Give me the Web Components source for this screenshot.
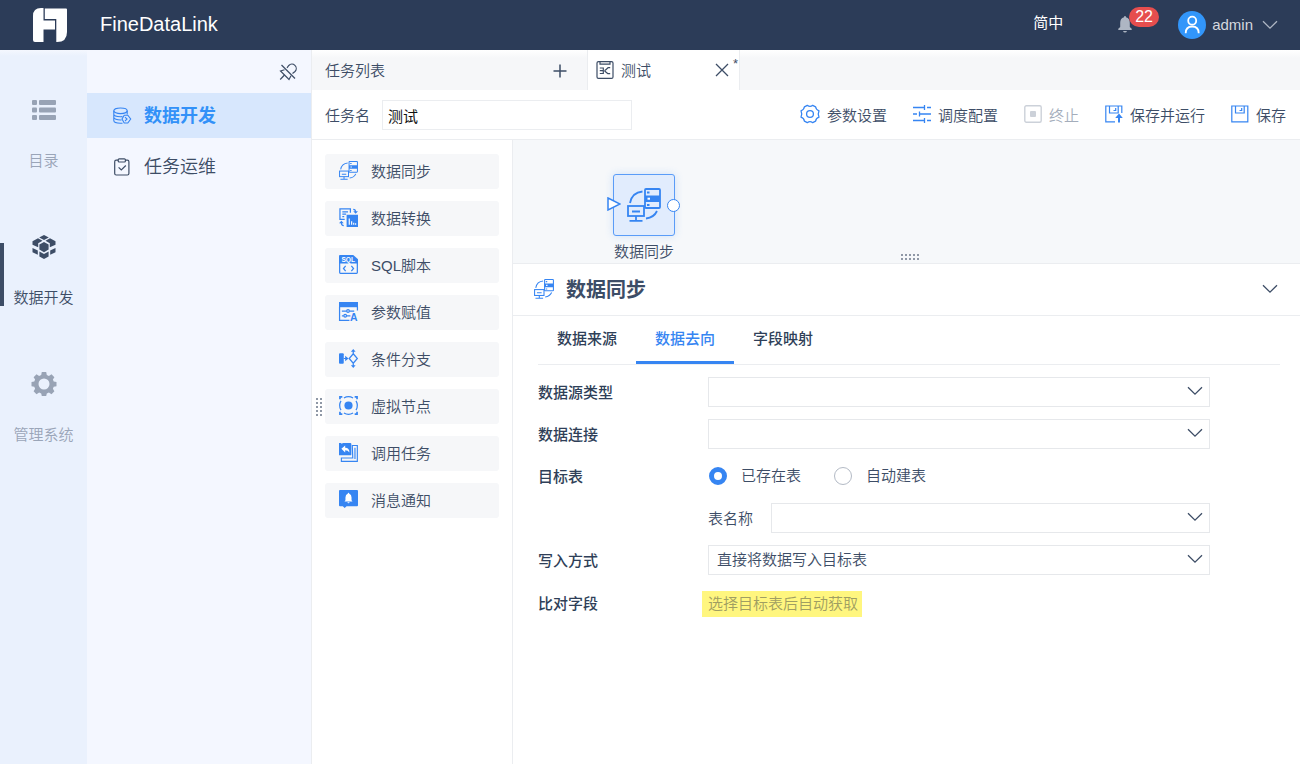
<!DOCTYPE html>
<html lang="zh-CN">
<head>
<meta charset="utf-8">
<title>FineDataLink</title>
<style>
  html, body { margin: 0; height: 100%; }
  body {
    font-family: "Liberation Sans", "Noto Sans CJK SC", sans-serif;
    font-size: 15px; line-height: 20px; font-weight: 350; color: #3d4d66;
    --blue: #3685f2; --line: #ebedf0; --text: #3d4d66; --muted: #9aa5b8; --pale: #f6f7f9;
  }
</style>
</head>
<body>
<fdl-app></fdl-app>
<script>
const ICONS = {
  logo: ['0 0 34 34', '<path fill="#fff" d="M8 0h2.500v12.500H22v9H10.500V34H2q-2 0-2-2V8Q0 0 8 0z"/><path fill="#fff" d="M11.800.5H33q1 0 1 1V24q0 10-10 10h-.7V11H11.800z"/>'],
  list: ['0 0 24 20', '<g fill="#98a3b5"><rect width="5" height="5" rx="1"/><rect x="7" width="17" height="5" rx="1"/><rect y="7.500" width="5" height="5" rx="1"/><rect x="7" y="7.500" width="17" height="5" rx="1"/><rect y="15" width="5" height="5" rx="1"/><rect x="7" y="15" width="17" height="5" rx="1"/></g>'],
  cubes: ['0 0 24 24', '<g fill="#3d4d66"><path d="M12 0l4.800 2.500L12 5 7.200 2.500z"/><path d="M6 3.300l4.500 2.400-4.300 2.500v4L.5 9.800V6.300z"/><path d="M18 3.300l-4.500 2.400 4.300 2.500v4l5.700-2.400V6.300z"/><path d="M12 7l4.600 2.400v5.200L12 17.200l-4.600-2.600V9.400z"/><path d="M.5 13l5.300 2.400v4.400L.5 17.300z"/><path d="M23.500 13l-5.300 2.400v4.400l5.300-2.500z"/><path d="M7.400 16.500l4.600 2.400 4.600-2.400v5L12 24l-4.600-2.500z"/></g>'],
  gear: ['0 0 24 24', '<path fill="#98a3b5" fill-rule="evenodd" d="M9.800 0h4.400l.6 3 2.100.9L19.500 2.200l2.900 3.100-1.500 2.300.8 2 2.800.5v4.200l-2.800.5-.8 2 1.500 2.400-2.900 3-2.600-1.600-2.100.8-.6 2.600H9.800l-.6-2.600-2.100-.8-2.600 1.600-2.900-3 1.500-2.400-.8-2L-.5 14.300v-4.200l2.800-.5.800-2-1.500-2.300 2.900-3.100 2.600 1.700 2.100-.9zM12 6.500a5.500 5.500 0 100 11 5.500 5.500 0 000-11z"/>'],
  unpin: ['0 0 18 18', '<g fill="none" stroke="#3d4d66" stroke-width="1.200"><path d="M2.500 2l13.500 13.500"/><path d="M8 4.800L9.800 2.500a4.200 4.200 0 016.200 6L13.500 10.500"/><path d="M5.500 6.700L1.500 8l8.500 8.500 2-3.800"/><path d="M5.500 12l-4.300 4.500"/></g>'],
  database: ['0 0 18 18', '<g fill="none" stroke="#3685f2" stroke-width="1.100"><ellipse cx="7.500" cy="3.800" rx="6.700" ry="2.800"/><path d="M.8 3.800v9.700c0 1.500 3 2.700 6.700 2.700h2M14.200 3.800V7.500M.8 7c0 1.500 3 2.700 6.700 2.700l2-.1M.8 10.300C.8 11.800 4 13 7.500 13h1"/><path d="M11.200 8.200h3.600L17.700 12l-2.900 4h-3.600l-2.200-4z"/><path d="M12 10.200l2 1.900-2 1.900"/></g>'],
  clipboard: ['0 0 18 18', '<g fill="none" stroke="#3d4d66" stroke-width="1.200"><rect x="1.700" y="2.200" width="14.200" height="14.800" rx="1.500"/><rect x="5.200" y=".8" width="7.200" height="3.200" rx="1" fill="#f4f7ff"/><path d="M5.600 9.300l2.700 2.700 4.500-4.500"/></g>'],
  bell: ['0 0 14 18', '<path fill="#aeb6c3" d="M7 1q1 0 1 1.300c2.800.7 3.800 3 3.800 5.700v4l1.900 1.700V15H.3v-1.300L2.200 12V8C2.200 5.300 3.200 3 6 2.300Q6 1 7 1zM5 16h4q-.5 1.500-2 1.500T5 16z"/>'],
  user: ['0 0 28 28', '<circle cx="14" cy="14" r="14" fill="#3296fa"/><g fill="none" stroke="#fff" stroke-width="1.800"><circle cx="14.200" cy="9.700" r="4"/><path d="M7.700 22.200c0-4.500 2.500-6.700 6.500-6.700s6.500 2.200 6.500 6.700"/></g>'],
  down: ['0 0 16 10', '<path d="M1 1.200l7 7 7-7" fill="none" stroke="currentColor" stroke-width="1.300"/>'],
  plus: ['0 0 14 14', '<path d="M7 .5v13M.5 7h13" stroke="#3d4d66" stroke-width="1.500"/>'],
  close: ['0 0 14 14', '<path d="M1 1l12 12M13 1L1 13" stroke="#3d4d66" stroke-width="1.300"/>'],
  task: ['0 0 18 18', '<g fill="none" stroke="#3d4d66" stroke-width="1.200"><rect x="1" y=".6" width="16" height="16.800" rx="1.500"/><path d="M4 .8v2.400h10V.8M3.800 7h3.500v5.500H3.800M3.800 9.700h3.500M14.200 6.700H12Q10 8.500 8.500 9.700M14.200 12.700H12Q10 11 8.500 9.700"/></g>'],
  params: ['0 0 20 20', '<g fill="none" stroke="#3685f2" stroke-width="1.300"><path d="M7.300 1.300Q10 3.600 12.700 1.300l2.900 1.500q.3 3 3.400 4-1.500 3.200 0 6.400-3.100 1-3.400 4l-2.900 1.500q-2.700-2.300-5.400 0l-2.900-1.500q-.3-3-3.400-4 1.500-3.200 0-6.400 3.100-1 3.400-4z" stroke-linejoin="round"/><circle cx="10" cy="10" r="3.400"/></g>'],
  sliders: ['0 0 18 18', '<g fill="none" stroke="#3685f2" stroke-width="1.300"><path d="M0 2.500h11.500M14 2.500h4M11.500 0v5M0 9h4M6.500 9H18M6.500 6.500v5M0 15.500h11.500M14 15.500h4M11.500 13v5"/></g>'],
  stop: ['0 0 18 18', '<rect x=".8" y=".8" width="16.400" height="16.400" rx="1.500" fill="none" stroke="#ccd1d9" stroke-width="1.400"/><rect x="6" y="6" width="6" height="6" rx="1" fill="#ccd1d9"/>'],
  saverun: ['0 0 18 18', '<g fill="none" stroke="#3685f2" stroke-width="1.200"><path d="M10 16.800H.8V1h16v7"/><path d="M4.500 1v7h8.700V1M10.700 3v2.500H8.500"/></g><path d="M14 8.500l3.800 4.500H15v4.500h-2V13h-2.800z" fill="#3685f2"/>'],
  save: ['0 0 18 18', '<g fill="none" stroke="#3685f2" stroke-width="1.200"><path d="M.8 1h16v15.800H.8z"/><path d="M4.500 1v7h8.700V1M10.700 3v2.500H8.500"/></g>'],
  sync: ['0 0 34 34', '<g fill="none" stroke="#3685f2" stroke-width="1.800"><path d="M3 15Q5 4.500 15.500 3.500M30 23q-3 6.500-11 7.500"/><rect x="1" y="18" width="16" height="10"/><path d="M5 23.500h8M9 28v4M2.500 32.800h13"/><rect x="18" y="1" width="15" height="19" rx="1"/></g><path fill="#3685f2" d="M18 7.500h15v6.500H18zM20 3.500h2.500v2H20zM20 16h2.500v2H20z"/><path fill="#fff" d="M20.500 9.700H23v2h-2.500z"/>'],
  transform: ['0 0 20 20', '<g fill="none" stroke="#3685f2" stroke-width="1.300"><path d="M6 12H1V1h11v4M3.500 4h6M3.500 6.500h4M3.500 9h2M15 1.500q2.500 0 2.500 3M5 18.500q-2.500 0-2.500-3"/></g><path fill="#3685f2" d="M15 3.500h5L17.500 6zM0 16h5L2.500 13.500zM8 7h12v13H8z"/><path d="M10.800 17.500V11M13.300 17.500V14M15.500 17.500v-2M17.500 17.500V16" stroke="#fff" stroke-width="1.200"/>'],
  sql: ['0 0 20 20', '<path fill="#3685f2" d="M1 0h14l5 4.500V9H0V1q0-1 1-1z"/><path d="M.7 8v10.500q0 .8.800.8h17q.8 0 .8-.8V8M7 11.500l-2.300 2.700L7 17M13 11.500l2.300 2.700L13 17" fill="none" stroke="#3685f2" stroke-width="1.300"/><text x="2.500" y="7.800" font-size="7" font-weight="700" fill="#fff" font-family="Liberation Sans, sans-serif">SQL</text>'],
  assign: ['0 0 20 20', '<path fill="#3685f2" d="M0 0h20v5.500H0z"/><g stroke="#3685f2" fill="none" stroke-width="1.300"><path d="M.6 5v14.400H11M19.400 5v4M3 9.500h5M11 9.500h5M3 14.500h2M8 14.500h4"/><circle cx="9.500" cy="9.500" r="1.400"/><circle cx="6.500" cy="14.500" r="1.400"/></g><text x="11.500" y="19.800" font-size="11" font-weight="700" fill="#3685f2" font-family="Liberation Sans, sans-serif">A</text>'],
  branch: ['0 0 20 20', '<g fill="#3685f2"><rect y="4.500" width="5" height="11" rx="1"/><path d="M6.500 7L10 10l-3.500 3zM15 0l2.500 3h-5zM15 20l2.500-3h-5z"/></g><path d="M5 10h3M15 2v3M15 15v3M15 5l4.300 5-4.300 5-4.300-5z" fill="none" stroke="#3685f2" stroke-width="1.300"/>'],
  virtual: ['0 0 20 20', '<circle cx="10" cy="10" r="4.300" fill="#3685f2"/><g fill="none" stroke="#3685f2"><path d="M5.200 2.100a9.200 9.200 0 019.600 0M5.200 17.900a9.200 9.200 0 009.600 0M2.100 5.200a9.200 9.200 0 000 9.600M17.900 5.200a9.200 9.200 0 010 9.600" stroke-width="1.300"/><path d="M1 3.500V1h2.500M16.500 1H19v2.500M19 16.500V19h-2.500M3.500 19H1v-2.500" stroke-width="1.800"/></g>'],
  call: ['0 0 20 20', '<path fill="#3685f2" d="M0 0h2q1 1.500 2 0h8q1 0 1 1v11q0 1-1 1H0z"/><path fill="#fff" d="M2.500 6l4-3.500V5Q11 5 11 10 9.500 7.500 6.500 7.500V10z"/><path d="M14 2.600h5.300v16.700H2.500v-3.500H14.500zM16.800 5v11.800" fill="none" stroke="#3685f2" stroke-width="1.200"/>'],
  notice: ['0 0 20 20', '<path fill="#3685f2" d="M1 0h18q1 0 1 1v15q0 1-1 1H8l-2 2-2-2H1q-1 0-1-1V1q0-1 1-1z"/><path fill="#fff" d="M10 3q.8 0 .8 1 2.400.8 2.400 4v2.800l1 1.400H5.800l1-1.400V8q0-3.200 2.400-4 0-1 .8-1zM8.800 12.800h2.400q-.3 1.200-1.200 1.200t-1.200-1.200z"/>']
};

function define(name, render) {
  customElements.define(name, class extends HTMLElement {
    connectedCallback() {
      if (this.shadowRoot) return;
      const t = document.createElement('template');
      t.innerHTML = '<style>*{box-sizing:border-box}button,input,select{font:inherit;color:inherit;margin:0}button{border:0;background:none;padding:0;text-align:left;cursor:pointer}a{color:inherit;text-decoration:none}</style>' + render(this);
      this.attachShadow({ mode: 'open' }).append(t.content.cloneNode(true));
    }
  });
}
const attr = (el, n) => el.getAttribute(n) || '';

/* <fdl-icon name size>: size is the drawn width */
define('fdl-icon', el => {
  const [box, body] = ICONS[attr(el, 'name')];
  const [, , w, h] = box.split(' ').map(Number);
  const width = Number(attr(el, 'size')) || w;
  return `<style>:host{display:block;flex:none}svg{display:block;overflow:visible}</style>
  <svg width="${width}" height="${Math.round(width * h / w)}" viewBox="${box}" aria-hidden="true">${body}</svg>`;
});

define('drag-dots', el => `<style>
  :host{display:grid;grid-template-columns:repeat(${attr(el, 'cols')},2px);gap:2px}
  i{width:2px;height:2px;background:#8f98a6}
  </style>${'<i></i>'.repeat(10)}`);

define('fdl-header', () => `<style>
  :host{display:flex;align-items:center;height:50px;background:#2c3c58;color:#fff;padding:0 22px 0 33px;font-weight:400}
  h1{margin:0 auto 0 33px;padding-bottom:2px;font-size:20px;line-height:24px;font-weight:400}
  .lang{margin-right:55px;padding-bottom:5px}
  .bell{position:relative;margin-right:46px;padding-bottom:2px}
  .bell span{position:absolute;left:11px;top:-8px;height:20px;border-radius:10px;background:#e64e4e;padding:0 6px;font-size:16px;line-height:20px}
  .user{display:flex;align-items:center;color:#d5d8de}
  .user span{margin:0 9px 0 6px}
  .user fdl-icon:last-child{color:#aeb6c3}
  </style>
  <fdl-icon name="logo"></fdl-icon><h1>FineDataLink</h1>
  <button class="lang">简中</button>
  <button class="bell" aria-label="消息"><fdl-icon name="bell"></fdl-icon><span>22</span></button>
  <button class="user"><fdl-icon name="user"></fdl-icon><span>admin</span><fdl-icon name="down"></fdl-icon></button>`);

define('rail-item', el => `<style>
  :host{display:block;height:137px;color:var(--muted)}
  :host([active]){color:var(--text)}
  a{display:flex;flex-direction:column;align-items:center;gap:29px;position:relative}
  .pic{height:24px;display:flex;align-items:center}
  :host([active]) a::before{content:"";position:absolute;left:0;top:8px;width:4px;height:63px;background:#3d4d66}
  </style><a href="#"><span class="pic"><fdl-icon name="${attr(el, 'icon')}"></fdl-icon></span><slot></slot></a>`);

define('side-rail', () => `<style>
  :host{display:block;width:87px;background:linear-gradient(#f4f7fe,#eaf1fd 6px);padding-top:48px}
  </style><nav>
  <rail-item icon="list">目录</rail-item>
  <rail-item icon="cubes" active>数据开发</rail-item>
  <rail-item icon="gear">管理系统</rail-item></nav>`);

define('menu-item', el => `<style>
  :host{display:block;font-size:18px}
  a{display:flex;align-items:center;gap:13px;height:45px;padding-left:26px}
  :host([active]){background:#d7e7fd;color:#3291f8;font-weight:700}
  </style><a href="#"><fdl-icon name="${attr(el, 'icon')}"></fdl-icon><slot></slot></a>`);

define('side-menu', () => `<style>
  :host{display:block;width:225px;background:#f4f7ff;border-right:1px solid var(--line)}
  .top{display:flex;justify-content:flex-end;align-items:center;height:43px;padding-right:14px}
  nav{display:grid;gap:6px}
  </style><div class="top"><button aria-label="取消固定"><fdl-icon name="unpin"></fdl-icon></button></div>
  <nav><menu-item icon="database" active>数据开发</menu-item><menu-item icon="clipboard">任务运维</menu-item></nav>`);

define('task-tabs', () => `<style>
  :host{display:flex;height:40px;background:linear-gradient(#fff,var(--pale) 8px)}
  .list{width:275px;display:flex;align-items:center;justify-content:space-between;padding:2px 20px 0 13px}
  .tab{position:relative;width:153px;display:flex;align-items:center;gap:7px;padding:0 10px 0 8px;background:#fff;border:solid var(--line);border-width:0 1px}
  .tab span{margin-right:auto;padding-top:2px}
  sup{position:absolute;right:1px;top:6px;font-size:13px;line-height:16px}
  </style>
  <div class="list"><span>任务列表</span><button aria-label="新建任务"><fdl-icon name="plus"></fdl-icon></button></div>
  <div class="tab"><fdl-icon name="task"></fdl-icon><span>测试</span><button aria-label="关闭"><fdl-icon name="close"></fdl-icon></button><sup>*</sup></div>`);

define('tool-button', el => `<style>
  :host{display:block}
  button{display:flex;align-items:center;gap:7px}
  fdl-icon{padding-bottom:4px}
  button:disabled{color:#a4adbb}
  </style><button ${el.hasAttribute('disabled') ? 'disabled' : ''}><fdl-icon name="${attr(el, 'icon')}" size="${attr(el, 'size') || 18}"></fdl-icon><slot></slot></button>`);

define('task-toolbar', () => `<style>
  :host{display:flex;align-items:center;gap:26px;height:50px;padding:0 14px 0 13px;background:#fff;border-bottom:1px solid var(--line)}
  .name{display:flex;align-items:center;gap:12px;margin-right:auto}
  .name label{padding-top:2px}
  input{width:250px;height:30px;border:1px solid var(--line);padding:2px 5px 0;color:#111;font-weight:400;outline:0}
  tool-button{padding-top:2px}
  </style>
  <div class="name"><label for="task-name">任务名</label><input id="task-name" value="测试"></div>
  <tool-button icon="params" size="20">参数设置</tool-button>
  <tool-button icon="sliders">调度配置</tool-button>
  <tool-button icon="stop" disabled>终止</tool-button>
  <tool-button icon="saverun">保存并运行</tool-button>
  <tool-button icon="save">保存</tool-button>`);

define('palette-item', el => `<style>
  :host{display:block}
  button{display:flex;align-items:center;gap:13px;width:100%;height:35px;padding-left:14px;background:var(--pale);border-radius:3px}
  fdl-icon{padding-bottom:3px}
  </style><button><fdl-icon name="${attr(el, 'icon')}" size="19"></fdl-icon><slot></slot></button>`);

define('node-palette', () => `<style>
  :host{display:grid;align-content:start;gap:12px;position:relative;width:201px;padding:14px 13px 0;border-right:1px solid var(--line)}
  drag-dots{position:absolute;left:4px;top:258px}
  </style>
  <palette-item icon="sync">数据同步</palette-item>
  <palette-item icon="transform">数据转换</palette-item>
  <palette-item icon="sql">SQL脚本</palette-item>
  <palette-item icon="assign">参数赋值</palette-item>
  <palette-item icon="branch">条件分支</palette-item>
  <palette-item icon="virtual">虚拟节点</palette-item>
  <palette-item icon="call">调用任务</palette-item>
  <palette-item icon="notice">消息通知</palette-item>
  <drag-dots cols="2"></drag-dots>`);

define('flow-node', el => `<style>
  :host{display:block;width:62px}
  .box{position:relative;display:flex;align-items:center;justify-content:center;height:62px;background:#e1ecfd;border:1px solid #5a9cf8;border-radius:3px;box-shadow:0 0 8px #3685f233}
  .in{position:absolute;left:-7px;top:22px}
  .out{position:absolute;right:-6px;top:24px;width:13px;height:13px;border:1px solid #3685f2;border-radius:50%;background:#fff}
  .label{display:flex;justify-content:center;padding-top:6px;white-space:nowrap}
  </style><div class="box"><svg class="in" width="14" height="14"><path d="M1 1l12 6L1 13z" fill="#fff" stroke="#3685f2" stroke-width="1.500"/></svg>
  <fdl-icon name="sync"></fdl-icon><i class="out"></i></div><div class="label"><slot></slot></div>`);

define('flow-canvas', () => `<style>
  :host{display:block;position:relative;height:124px;background:#f6f8fa;border-bottom:1px solid var(--line)}
  flow-node{position:absolute;left:100px;top:34px}
  drag-dots{position:absolute;left:calc(50% - 6px);bottom:3px}
  </style><flow-node>数据同步</flow-node><drag-dots cols="5"></drag-dots>`);

define('select-box', el => `<style>
  :host{display:flex;flex:1;align-items:center}
  label{width:170px;flex:none;font-weight:500;color:#2f3f58;padding-top:2px}
  :host([sub]) label{width:63px;font-weight:350;color:inherit}
  .wrap{position:relative;flex:1}
  select{display:block;width:100%;height:30px;appearance:none;background:#fff;border:1px solid #e6e8eb;border-radius:0;padding:0 30px 0 8px;outline:0}
  fdl-icon{position:absolute;right:7px;top:9px;pointer-events:none}
  </style><label for="s">${attr(el, 'label')}</label><div class="wrap"><select id="s"><option>${attr(el, 'value')}</option></select><fdl-icon name="down"></fdl-icon></div>`);

define('target-radios', () => `<style>
  :host{display:block}
  fieldset{display:flex;align-items:center;height:30px;margin:0;padding:0;border:0}
  .cap{width:170px;font-weight:500;color:#2f3f58;padding-top:2px}
  label{display:flex;align-items:center;gap:14px;margin-right:33px}
  input{appearance:none;width:18px;height:18px;border:1px solid #b3bac5;border-radius:50%;background:#fff}
  input:checked{border:5px solid var(--blue)}
  .opts{display:flex;padding-left:1px}
  </style><fieldset aria-labelledby="cap"><span class="cap" id="cap">目标表</span><div class="opts">
  <label><input type="radio" name="t" checked>已存在表</label><label><input type="radio" name="t">自动建表</label></div></fieldset>`);

define('config-panel', () => `<style>
  :host{display:block;flex:1;background:#fff}
  header{display:flex;align-items:center;gap:12px;height:52px;padding:0 22px 2px 21px;border-bottom:1px solid var(--line)}
  h2{margin:0 auto 0 0;padding-top:2px;font-size:20px;line-height:28px;font-weight:700}
  .tabs{display:flex;margin:0 20px 0 25px;height:49px;border-bottom:1px solid var(--line);font-weight:500;color:#2f3f58}
  .tabs button{height:48px;padding:0 19px;border-bottom:3px solid transparent}
  .tabs button[aria-selected=true]{color:var(--blue);border-color:var(--blue)}
  form{display:grid;gap:12px;padding:12px 90px 20px 25px}
  .indent{display:flex;padding-left:170px}
  .row{display:flex;align-items:center;height:34px}
  .row b{width:164px;font-weight:500;color:#2f3f58}
  mark{background:#fff67f;color:#a09e62;padding:3px 4px 3px 6px}
  </style>
  <header><fdl-icon name="sync" size="20"></fdl-icon><h2>数据同步</h2><button aria-label="收起"><fdl-icon name="down"></fdl-icon></button></header>
  <div class="tabs" role="tablist"><button role="tab">数据来源</button><button role="tab" aria-selected="true">数据去向</button><button role="tab">字段映射</button></div>
  <form>
    <select-box label="数据源类型"></select-box>
    <select-box label="数据连接"></select-box>
    <target-radios></target-radios>
    <div class="indent"><select-box sub label="表名称"></select-box></div>
    <select-box label="写入方式" value="直接将数据写入目标表"></select-box>
    <div class="row"><b>比对字段</b><mark>选择目标表后自动获取</mark></div>
  </form>`);

define('fdl-app', () => `<style>
  :host{display:flex;flex-direction:column;min-height:100%;background:#fff}
  .body{display:flex;flex:1}
  main{flex:1;min-width:0;display:flex;flex-direction:column}
  .work{display:flex;flex:1}
  .stage{flex:1;min-width:0;display:flex;flex-direction:column}
  </style><fdl-header></fdl-header>
  <div class="body"><side-rail></side-rail><side-menu></side-menu>
  <main><task-tabs></task-tabs><task-toolbar></task-toolbar>
  <div class="work"><node-palette></node-palette><div class="stage"><flow-canvas></flow-canvas><config-panel></config-panel></div></div>
  </main></div>`);
</script>
</body>
</html>
